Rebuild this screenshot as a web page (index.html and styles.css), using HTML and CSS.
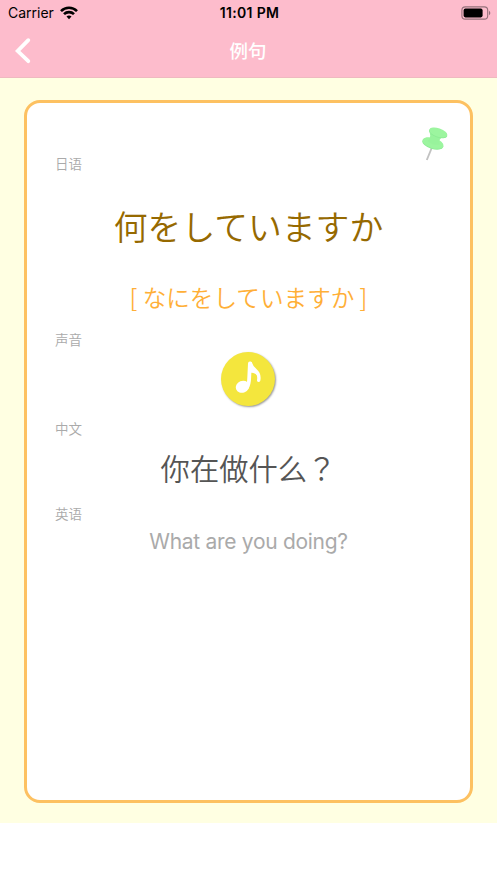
FILE: index.html
```html
<!DOCTYPE html>
<html lang="zh-CN">
<head>
    <meta charset="UTF-8">
    <meta name="viewport" content="width=device-width, initial-scale=1.0">
    <title>例句</title>
    <link rel="stylesheet" href="styles.css">
</head>
<body>

<header class="header">
    <!-- Status Bar -->
    <div class="status-bar">
        <div class="carrier">
            <span class="carrier-name">Carrier</span>
            <svg class="wifi" width="18" height="14" viewBox="0 0 18 14" fill="none" stroke="#000" stroke-width="2.6">
                <path d="M1 5.1C5.5 .6 12.5 .6 17 5.1"/>
                <path d="M4 8.2C6.8 5.4 11.2 5.4 14 8.2"/>
                <path d="M6.5 10.6C8 9.2 10 9.2 11.5 10.6L9 13.2Z" fill="#000" stroke="none"/>
            </svg>
        </div>
        <div class="time">11:01 PM</div>
        <svg class="battery" width="30" height="14" viewBox="0 0 30 14">
            <rect x=".9" y=".9" width="25.8" height="12.2" rx="3.4" fill="none" stroke="#94707a" stroke-width="1.1"/>
            <rect x="2.6" y="2.6" width="19" height="8.8" rx="1.8"/>
            <path d="M28 4.8C29.8 5.5 29.8 8.5 28 9.2Z" fill="#94707a"/>
        </svg>
    </div>

    <!-- Navigation Bar -->
    <div class="nav-bar">
        <button class="back-btn" aria-label="Back">
            <svg width="18" height="28" viewBox="0 0 18 28" fill="none" stroke="#fff" stroke-width="3.8" stroke-linecap="round">
                <path d="M14.3 3.2L3.7 14L14.3 24.2"/>
            </svg>
        </button>
        <h1 class="title">例句</h1>
    </div>
</header>

<main class="content">
    <div class="card">
        <!-- Pin -->
        <svg class="pin" width="28" height="36" viewBox="0 0 28 36">
            <path d="M10.9 20.5L5.8 33" stroke="#c2c2c2" stroke-width="1.9"/>
            <ellipse cx="11.8" cy="16.9" rx="10.9" ry="5.1" transform="rotate(17 11.8 16.9)" fill="#8ceb94"/>
            <ellipse cx="12" cy="16" rx="10.9" ry="5.1" transform="rotate(17 12 16)" fill="#9cf59f"/>
            <path d="M8.8 6C9.8 9.5 9 12 6.5 14C10 17.5 15 18.5 19 17.5C17.3 14.5 18.5 11.5 22 10Z" fill="#98f39c"/>
            <ellipse cx="17.1" cy="6.3" rx="9.5" ry="4.2" transform="rotate(19 17.1 6.3)" fill="#8ceb94"/>
            <ellipse cx="17.3" cy="5.5" rx="9.4" ry="4.2" transform="rotate(19 17.3 5.5)" fill="#9cf59f"/>
        </svg>

        <div class="label">日语</div>
        <div class="japanese" lang="ja">何をしていますか</div>
        <div class="kana" lang="ja">[ なにをしていますか ]</div>

        <div class="label">声音</div>
        <button class="sound-btn" aria-label="Play">
            <svg width="54" height="54" viewBox="0 0 54 54">
                <ellipse cx="21.5" cy="34.7" rx="6.9" ry="5.9" transform="rotate(-22 21.5 34.7)" fill="#fff"/>
                <path d="M28.9 11.5L28.2 26C28.1 30 27.8 33 25.8 35.5" fill="none" stroke="#fff" stroke-width="3.8" stroke-linecap="round"/>
                <path d="M29.6 11.5C31 18 39.4 18.5 37.7 28.3" fill="none" stroke="#fff" stroke-width="3.4" stroke-linecap="round"/>
                <path d="M29.2 13L35 19.5L37.5 26C35.5 21.5 32.5 20.8 29.2 20.8Z" fill="#fff"/>
            </svg>
        </button>

        <div class="label">中文</div>
        <div class="chinese">你在做什么<span class="mark" lang="zh-TW">？</span></div>

        <div class="label">英语</div>
        <div class="english" lang="en">What are you doing?</div>
    </div>
</main>

</body>
</html>
```

FILE: styles.css
```css
/* Global Styling */
* {
    box-sizing: border-box;
}

body {
    margin: 0;
    height: 883px;
    background-color: #fff;
    font-family: Inter, 'Noto Sans CJK SC', sans-serif;
    overflow: hidden;
}

button {
    padding: 0;
    border: none;
    background: none;
    cursor: pointer;
}

svg {
    display: block;
}

/* Header */
.header {
    height: 78px;
    background-color: #fdbccc;
    border-bottom: 1px solid #efb9c0;
}

.status-bar {
    display: grid;
    grid-template-columns: 1fr auto 1fr;
    align-items: center;
    height: 25px;
    padding: 0 6px 0 8px;
    font-size: 14px;
}

.carrier {
    display: flex;
    align-items: center;
    gap: 6px;
}

.time {
    font-size: 14px;
    font-weight: 600;
    letter-spacing: 0.35px;
}

.battery {
    justify-self: end;
}

/* Navigation Bar */
.nav-bar {
    display: grid;
    grid-template-columns: 1fr auto 1fr;
    align-items: center;
    height: 51px;
    padding: 0 15px 0 14px;
}

.title {
    margin: 0;
    color: #fff;
    font-size: 18.5px;
    line-height: 28px;
    font-weight: 500;
}

/* Content */
.content {
    height: 745px;
    padding: 22px 24px 0;
    background-color: #ffffe2;
}

.card {
    position: relative;
    display: flex;
    flex-direction: column;
    align-items: center;
    height: 703px;
    padding: 51px 28px 0;
    background-color: #fff;
    border: 3px solid #fdc161;
    border-radius: 16px;
}

/* Pin in the corner of the card */
.pin {
    position: absolute;
    top: 24px;
    right: 21px;
}

.label {
    align-self: flex-start;
    color: #aaa;
    font-size: 13.5px;
    line-height: 20px;
    font-weight: 350;
}

.japanese {
    margin-top: 27px;
    color: #966900;
    font-family: 'Noto Sans CJK JP', sans-serif;
    font-size: 33.8px;
    line-height: 50px;
    font-weight: 350;
}

.kana {
    margin: 28px 0 15px;
    color: #ffaf37;
    font-family: 'Noto Sans CJK JP', sans-serif;
    font-size: 23.6px;
    line-height: 36px;
    font-weight: 350;
}

/* Sound Button */
.sound-btn {
    width: 54px;
    height: 54px;
    margin: 2px 1px 13px 0;
    background-color: #f4e63d;
    border-radius: 50%;
    box-shadow: 1px 1px 2px rgba(0, 0, 0, 0.4);
}

.chinese {
    margin: 6px 0 15px;
    color: #555;
    font-family: 'Noto Sans CJK SC', sans-serif;
    font-size: 29.3px;
    line-height: 44px;
    font-weight: 350;
}

.mark {
    font-family: 'Noto Sans CJK TC', sans-serif;
}

.english {
    margin-top: 4px;
    color: #aaa;
    font-size: 21px;
    line-height: 28px;
    letter-spacing: -0.3px;
}
```
